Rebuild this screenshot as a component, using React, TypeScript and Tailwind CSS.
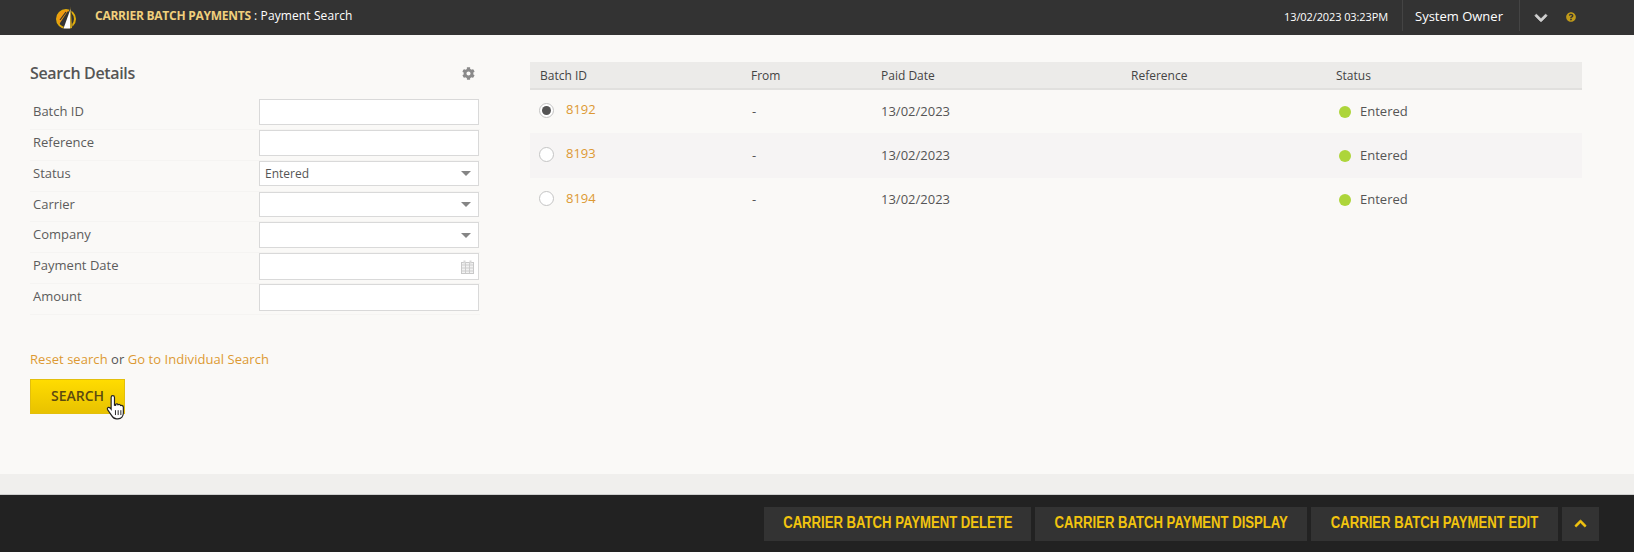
import { FaChevronDown, FaChevronUp, FaCog, FaQuestionCircle } from 'react-icons/fa';

const fields = [
  { label: 'Batch ID', kind: 'text', h: 'h-[26px]', row: 'h-[31px]' },
  { label: 'Reference', kind: 'text', h: 'h-[26px]', row: 'h-[31px]' },
  { label: 'Status', kind: 'select', value: 'Entered', h: 'h-[25px]', row: 'h-[31px]' },
  { label: 'Carrier', kind: 'select', h: 'h-[25px]', row: 'h-[30px]' },
  { label: 'Company', kind: 'select', h: 'h-[26px]', row: 'h-[31px]' },
  { label: 'Payment Date', kind: 'date', h: 'h-[27px]', row: 'h-[31px]' },
  { label: 'Amount', kind: 'text', h: 'h-[27px]', row: 'h-[31px]' },
];

const batches = [
  { id: '8192', selected: true, h: 'h-[43px]' },
  { id: '8193', selected: false, h: 'h-[45px] bg-[#f6f4f4]' },
  { id: '8194', selected: false, h: 'h-[44px]' },
];

const gridCols = 'grid grid-cols-[211px_130px_250px_205px_1fr]';

function Logo() {
  return (
    <svg width="22" height="25" viewBox="0 0 22 25">
      <circle cx="11" cy="14" r="9" fill="none" stroke="#e0ad0c" strokeWidth="2" />
      <path d="M2 14 A9 9 0 0 1 11 5 L13.500 5 L4 19.500 Z" fill="#f09a10" />
      <path d="M5 15 L11 7" stroke="#333333" strokeWidth="1.200" />
      <path d="M16 0 L17.500 23.500 L8 24 Z" fill="#333333" />
      <path d="M15.500 4 L15 23.500 L8.500 23.500 Z" fill="#ffffff" />
      <path d="M15.500 1 L17 23 L15 23.500 Z" fill="#d2a820" />
    </svg>
  );
}

function Header() {
  return (
    <header className="h-[35px] bg-[#333333] flex items-center text-white shrink-0">
      <div className="ml-[55px] w-[40px]">
        <Logo />
      </div>
      <div className="text-[12px] leading-[32px] h-[35px]">
        <span className="font-bold text-[#f0cf7c] tracking-[-0.25px]">CARRIER BATCH PAYMENTS</span>
        <span className="tracking-[0.1px]"> : Payment Search</span>
      </div>
      <div className="ml-auto flex items-center h-full">
        <span className="text-[11px] pr-[14px] tracking-[-0.1px]">13/02/2023 03:23PM</span>
        <div className="h-[31px] -mt-[4px] border-l border-[#444444] border-r pl-[12px] w-[118px] flex items-center pt-[3px] text-[13px]">
          System Owner
        </div>
        <FaChevronDown className="ml-[14px] text-[#d0d0d0] w-[14px] h-[14px]" stroke="currentColor" strokeWidth={30} />
        <FaQuestionCircle className="ml-[18px] mr-[58px] text-[#c09a1a] w-[10px] h-[10px] -mt-[1px]" />
      </div>
    </header>
  );
}

function Field({ field }: { field: (typeof fields)[number] }) {
  return (
    <div className={`flex items-start ${field.row} border-b border-[#f5f4f2] pl-[3px]`}>
      <label className="w-[226px] pt-[3px] text-[13px] text-[#5c5c5c]">{field.label}</label>
      <div className={`w-[220px] ${field.h} bg-white border border-[#d9d9d9] flex items-center pl-[5px] pr-[4px] text-[12px] text-[#555555]`}>
        <span>{field.value}</span>
        {field.kind === 'select' && (
          <span className="ml-auto mr-[3px] w-0 h-0 border-x-[5px] border-x-transparent border-t-[5px] border-t-[#858585]" />
        )}
        {field.kind === 'date' && (
          <svg className="ml-auto" width="13" height="14" viewBox="0 0 13 14">
            <rect x="0.5" y="2.5" width="12" height="11" fill="#f2f2f2" stroke="#c8c8c8" />
            <path d="M0.5 5h12M0.5 8h12M0.5 11h12M4.5 3v10M8.5 3v10" stroke="#cccccc" />
            <rect x="2.5" y="0.5" width="2" height="3" fill="#d8d8d8" />
            <rect x="8.5" y="0.5" width="2" height="3" fill="#d8d8d8" />
          </svg>
        )}
      </div>
    </div>
  );
}

function SearchPanel() {
  return (
    <section className="w-[450px] shrink-0">
      <div className="flex items-center justify-between h-[34px] mt-[21px] mb-[9px] pr-[5px]">
        <h2 className="text-[16px] font-semibold text-[#555555] tracking-[-0.35px]">Search Details</h2>
        <FaCog className="text-[#8a8a8a] w-[13px] h-[13px]" />
      </div>
      {fields.map(f => (
        <Field key={f.label} field={f} />
      ))}
      <p className="mt-[35px] text-[13px] text-[#555555] tracking-[0.05px]">
        <a className="text-[#dd9933]">Reset search</a> or <a className="text-[#dd9933]">Go to Individual Search</a>
      </p>
      <div className="relative w-[95px] mt-[9px]">
        <button className="w-[95px] h-[35px] border border-[#e3bf0c] bg-gradient-to-b from-[#ffdc00] to-[#e8c200] text-[14px] font-semibold text-[#5c4a10] pb-[2px]">
          SEARCH
        </button>
        <svg className="absolute left-[76px] top-[15px]" width="20" height="27" viewBox="0 0 18 25">
          <path
            d="M6 1.500c1 0 1.600.7 1.600 1.700v7.200l1 .1V9.600c.9-.8 2-.6 2.300.4.9-.6 2-.3 2.300.7 1-.4 2.600.1 2.600 1.500v5.500c0 2.800-1.800 5.300-5 5.300H9.500c-2.300 0-3.300-1-4.500-3L1.200 14.500c-.6-1 .2-2.300 1.300-2.100.8.100 1.500 1 2 1.700V3.200C4.500 2.200 5 1.500 6 1.500z"
            fill="#ffffff"
            stroke="#222222"
            strokeWidth="1.100"
          />
          <path d="M8.500 15v4.500M11 15v4.500M13.500 15v4.500" stroke="#222222" strokeWidth="0.900" />
        </svg>
      </div>
    </section>
  );
}

function ResultsTable() {
  return (
    <section className="w-[1052px] shrink-0 mt-[27px] text-[13px]">
      <div className={`${gridCols} h-[28px] bg-[#ecebe9] border-b-2 border-[#e1e0de] text-[12px] text-[#444444] items-center pt-[1px]`}>
        <div className="pl-[10px]">Batch ID</div>
        <div className="pl-[10px]">From</div>
        <div className="pl-[10px]">Paid Date</div>
        <div className="pl-[10px]">Reference</div>
        <div className="pl-[10px]">Status</div>
      </div>
      {batches.map(b => (
        <div key={b.id} className={`${gridCols} ${b.h} items-center text-[#555555] text-[13px]`}>
          <div className="pl-[9px] flex items-center -mt-[3px]">
            <span className="w-[15px] h-[15px] rounded-full bg-white border border-[#c4c4c4] flex items-center justify-center">
              {b.selected && <span className="w-[9px] h-[9px] rounded-full bg-[#555555]" />}
            </span>
            <a className="ml-[12px] text-[#dd9933]">{b.id}</a>
          </div>
          <div className="pl-[11px]">-</div>
          <div className="pl-[10px]">13/02/2023</div>
          <div />
          <div className="pl-[13px] flex items-center">
            <span className="w-[12px] h-[12px] rounded-full bg-[#add53a]" />
            <span className="ml-[9px]">Entered</span>
          </div>
        </div>
      ))}
    </section>
  );
}

function Footer() {
  const actions = [
    { label: 'CARRIER BATCH PAYMENT DELETE', w: 'w-[267px]' },
    { label: 'CARRIER BATCH PAYMENT DISPLAY', w: 'w-[272px]' },
    { label: 'CARRIER BATCH PAYMENT EDIT', w: 'w-[247px]' },
  ];
  return (
    <footer className="h-[58px] bg-[#222222] border-t border-[#cfcfcf] flex items-center justify-end gap-[4px] pr-[35px] shrink-0">
      {actions.map(a => (
        <button key={a.label} className={`${a.w} h-[34px] bg-[#333333] flex items-center justify-center overflow-hidden pb-[2px]`}>
          <span className="inline-block whitespace-nowrap scale-x-[0.82] text-[#f2c40f] text-[16px] font-bold font-['Liberation_Sans',sans-serif]">
            {a.label}
          </span>
        </button>
      ))}
      <button className="w-[37px] h-[34px] bg-[#333333] flex items-center justify-center">
        <FaChevronUp className="text-[#f2c40f] w-[13px] h-[13px]" stroke="currentColor" strokeWidth={30} />
      </button>
    </footer>
  );
}

export default function App() {
  return (
    <div className="h-[552px] w-[1634px] flex flex-col overflow-hidden bg-[#faf9f7] font-['Open_Sans',sans-serif]">
      <Header />
      <main className="h-[439px] flex pl-[30px] gap-[50px] bg-[#faf9f7] shrink-0">
        <SearchPanel />
        <ResultsTable />
      </main>
      <div className="h-[20px] bg-[#f0efed] shrink-0" />
      <Footer />
    </div>
  );
}
